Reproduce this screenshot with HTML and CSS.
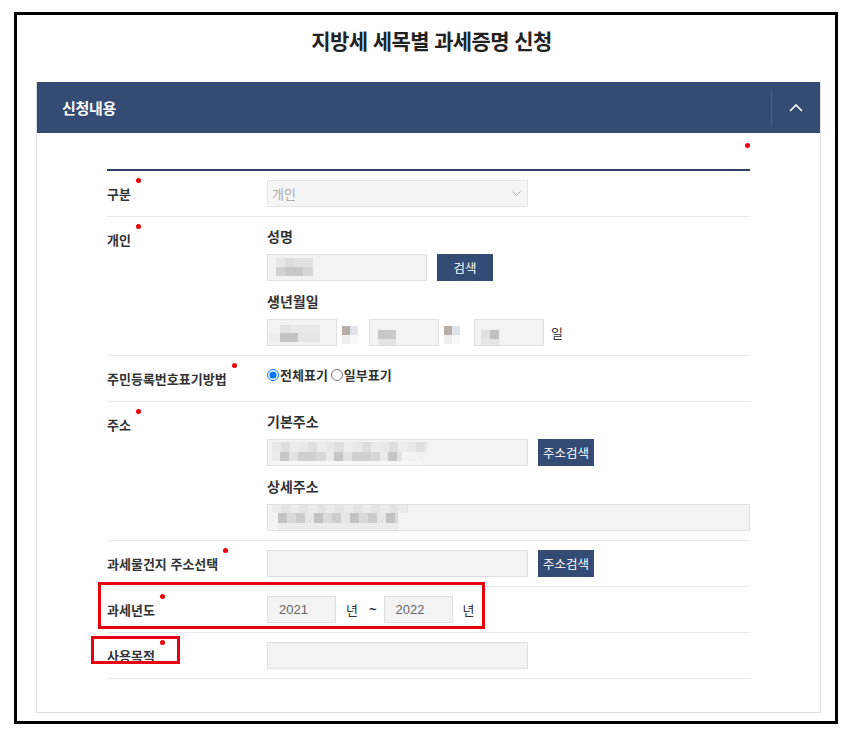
FILE: index.html
```html
<!DOCTYPE html>
<html lang="ko">
<head>
    <meta charset="UTF-8">
    <meta name="viewport" content="width=device-width, initial-scale=1.0">
    <title>지방세 세목별 과세증명 신청</title>
    <link rel="stylesheet" href="styles.css">
</head>
<body>
<div class="frame">
    <h1 class="page-title">지방세 세목별 과세증명 신청</h1>

    <div class="panel">
        <div class="panel-head">
            <h2>신청내용</h2>
            <button type="button" class="toggle" aria-label="접기">
                <svg width="14" height="8" viewBox="0 0 14 8"><polyline points="1,7 7,1 13,7" fill="none" stroke="#fff" stroke-width="1.6"/></svg>
            </button>
        </div>

        <div class="panel-body">
            <div class="legend"><span class="req"></span></div>

            <div class="form-table">
                <div class="row">
                    <div class="label">구분<span class="req"></span></div>
                    <div class="field">
                        <div class="select-wrap">
                            <select disabled><option>개인</option></select>
                            <svg class="caret" width="9" height="5" viewBox="0 0 9 5"><polyline points="0.5,0.5 4.5,4.5 8.5,0.5" fill="none" stroke="#aaa" stroke-width="1"/></svg>
                        </div>
                    </div>
                </div>

                <div class="row">
                    <div class="label">개인<span class="req"></span></div>
                    <div class="field">
                        <div class="sub">성명</div>
                        <div class="line">
                            <input type="text" class="inp w-name redact-name" readonly>
                            <button type="button" class="btn">검색</button>
                        </div>
                        <div class="sub next">생년월일</div>
                        <div class="line birth">
                            <input type="text" class="inp w-birth redact-b1" readonly>
                            <span class="blur-unit"></span>
                            <input type="text" class="inp w-birth redact-b2" readonly>
                            <span class="blur-unit"></span>
                            <input type="text" class="inp w-birth redact-b3" readonly>
                            <span class="unit">일</span>
                        </div>
                    </div>
                </div>

                <div class="row">
                    <div class="label">주민등록번호표기방법<span class="req"></span></div>
                    <div class="field">
                        <div class="radios">
                            <label><input type="radio" name="rrn" checked>전체표기</label>
                            <label><input type="radio" name="rrn">일부표기</label>
                        </div>
                    </div>
                </div>

                <div class="row">
                    <div class="label">주소<span class="req"></span></div>
                    <div class="field">
                        <div class="sub">기본주소</div>
                        <div class="line">
                            <input type="text" class="inp w-half redact-addr" readonly>
                            <button type="button" class="btn">주소검색</button>
                        </div>
                        <div class="sub next">상세주소</div>
                        <div class="line">
                            <input type="text" class="inp w-full redact-detail" readonly>
                        </div>
                    </div>
                </div>

                <div class="row">
                    <div class="label">과세물건지 주소선택<span class="req"></span></div>
                    <div class="field">
                        <div class="line">
                            <input type="text" class="inp w-half" readonly>
                            <button type="button" class="btn">주소검색</button>
                        </div>
                    </div>
                </div>

                <div class="row">
                    <div class="label">과세년도<span class="req"></span></div>
                    <div class="field">
                        <div class="line years">
                            <input type="text" class="inp w-year" value="2021">
                            <span class="unit">년</span>
                            <span class="tilde">~</span>
                            <input type="text" class="inp w-year" value="2022">
                            <span class="unit">년</span>
                        </div>
                    </div>
                    <div class="mark mark-year"></div>
                </div>

                <div class="row">
                    <div class="label">사용목적<span class="req"></span></div>
                    <div class="field">
                        <div class="line">
                            <input type="text" class="inp w-half">
                        </div>
                    </div>
                    <div class="mark mark-use"></div>
                </div>
            </div>
        </div>
    </div>
</div>
</body>
</html>
```

FILE: styles.css
```css
* {
    box-sizing: border-box;
}

body {
    margin: 0;
    font-family: "Noto Sans CJK KR", "Noto Sans", sans-serif;
    color: #333;
    background: #fff;
}

.frame {
    width: 824px;
    height: 712px;
    margin: 12px 0 0 14px;
    border: 3px solid #000;
    padding: 11px 14px 0 19px;
}

.page-title {
    margin: 0;
    padding-left: 6px;
    font-size: 21px;
    line-height: 28px;
    font-weight: 700;
    text-align: center;
    color: #222;
    letter-spacing: -0.6px;
}

/* panel */
.panel {
    margin-top: 28px;
    border: 1px solid #ddd;
    border-top: 0;
}

.panel-head {
    display: flex;
    height: 51px;
    background: #344b73;
}

.panel-head h2 {
    flex: 1;
    margin: 0;
    padding-left: 25px;
    font-size: 15px;
    line-height: 51px;
    font-weight: 700;
    color: #fff;
    letter-spacing: -0.3px;
}

.toggle {
    width: 49px;
    margin: 9px 0 8px;
    padding: 0 0 2px;
    border: 0;
    border-left: 1px solid rgba(255, 255, 255, 0.12);
    background: none;
    cursor: pointer;
}

.panel-body {
    padding: 0 70px 33px;
}

.legend {
    height: 36px;
    padding-top: 10px;
    display: flex;
    justify-content: flex-end;
}

.req {
    display: inline-block;
    width: 5px;
    height: 5px;
    border-radius: 50%;
    background: #e8000b;
    flex: none;
}

/* form rows */
.form-table {
    border-top: 2px solid #2d4064;
}

.row {
    position: relative;
    display: grid;
    grid-template-columns: 160px 1fr;
    border-bottom: 1px solid #e9e9e9;
}

.label {
    display: flex;
    align-items: flex-start;
    padding: 13px 0 12px;
    font-size: 13px;
    line-height: 20px;
    font-weight: 700;
    color: #333;
}

.label .req {
    margin: -6px 0 0 5px;
}

.field {
    padding: 9px 0;
}

.sub {
    font-size: 14px;
    line-height: 20px;
    font-weight: 700;
    color: #333;
    margin-bottom: 8px;
}

.sub.next {
    margin-top: 10px;
}

.line {
    display: flex;
    align-items: center;
    gap: 9px;
}

.inp {
    height: 27px;
    padding: 0 12px;
    border: 1px solid #e0e0e0;
    background-color: #f3f3f3;
    font-family: "Liberation Sans", sans-serif;
    font-size: 13px;
    color: #666;
    outline: none;
}

.w-name { width: 160px; }
.w-half { width: 261px; }
.w-full { flex: 1; }
.w-birth { width: 70px; }
.w-year { width: 69px; padding-left: 11px; }

.btn {
    width: 56px;
    height: 27px;
    padding: 0;
    border: 0;
    background: #344b73;
    color: #fff;
    font-family: inherit;
    font-size: 12.5px;
    cursor: pointer;
}

.line .btn {
    margin-left: 1px;
}

.select-wrap {
    position: relative;
    width: 261px;
}

.select-wrap select {
    width: 100%;
    height: 27px;
    padding: 0 4px;
    appearance: none;
    -webkit-appearance: none;
    border: 1px solid #e4e4e4;
    background: #f5f5f5;
    color: #aaa;
    font-family: inherit;
    font-size: 13px;
    opacity: 1;
}

.select-wrap .caret {
    position: absolute;
    right: 7px;
    top: 11px;
}

.radios {
    display: flex;
    align-items: center;
    font-size: 13px;
    line-height: 20px;
    font-weight: 700;
    color: #333;
}

.radios label {
    display: flex;
    align-items: center;
    margin-right: 3px;
}

.radios input {
    width: 12px;
    height: 12px;
    margin: 0 1px 0 0;
}

.birth {
    gap: 0;
}

.blur-unit {
    width: 16px;
    height: 27px;
    margin: 0 11px 0 5px;
    background:
        linear-gradient(90deg, #b9aea6 0 8px, #dfe3ea 8px 16px) 0 7px / 16px 9px no-repeat,
        linear-gradient(90deg, #eeeeee 0 8px, #f7f7f7 8px 16px) 0 16px / 16px 9px no-repeat;
}

.birth .blur-unit + .w-birth + .blur-unit {
    margin-right: 14px;
}

.unit {
    font-size: 13px;
    line-height: 20px;
    color: #333;
    margin-left: 7px;
}

.years {
    gap: 0;
}

.years .unit {
    margin: 0 11px 0 10px;
}

.tilde {
    font-family: "Liberation Sans", sans-serif;
    font-size: 13px;
    font-weight: 700;
    margin-right: 7px;
}

/* redacted values */
.redact-name {
    background:
        linear-gradient(90deg, #e6e6e6 0 9px, #dcdcdc 9px 18px, #e2e2e2 18px 37px) 8px 3px / 37px 9px no-repeat,
        linear-gradient(90deg, #d2d2d2 0 9px, #c8c8c8 9px 27px, #d6d6d6 27px 37px) 8px 12px / 37px 9px no-repeat,
        #f3f3f3;
}

.redact-b1 {
    background:
        linear-gradient(90deg, #f3f3f3 0 10px, #e2e2e2 10px 20px, #e8e8e8 20px 38px) 2px 5px / 50px 8px no-repeat,
        linear-gradient(90deg, #ededed 0 10px, #c4c4c4 10px 28px, #e6e6e6 28px 50px) 2px 13px / 50px 9px no-repeat,
        #f3f3f3;
}

.redact-b2 {
    background:
        linear-gradient(90deg, #c8c8c8 0 18px, #f3f3f3 18px 30px) 8px 10px / 30px 9px no-repeat,
        linear-gradient(#e3e3e3, #e3e3e3) 8px 19px / 18px 6px no-repeat,
        #f3f3f3;
}

.redact-b3 {
    background:
        linear-gradient(90deg, #e0e0e0 0 9px, #c0c0c0 9px 18px) 6px 10px / 18px 9px no-repeat,
        linear-gradient(#e6e6e6, #e6e6e6) 6px 19px / 18px 6px no-repeat,
        #f3f3f3;
}

.redact-addr {
    background:
        repeating-linear-gradient(90deg, #e8e8e8 0 9px, #dedede 9px 18px, #ececec 18px 27px) 4px 2px / 156px 10px no-repeat,
        repeating-linear-gradient(90deg, #ebebeb 0 8px, #c6c6c6 8px 17px, #e2e2e2 17px 26px, #d0d0d0 26px 44px, #d8d8d8 44px 54px) 4px 12px / 130px 9px no-repeat,
        linear-gradient(#f7f7f7, #f7f7f7) 4px 21px / 150px 5px no-repeat,
        #f3f3f3;
}

.redact-detail {
    background:
        repeating-linear-gradient(90deg, #ececec 0 9px, #e3e3e3 9px 18px) 4px 0 / 136px 8px no-repeat,
        repeating-linear-gradient(90deg, #c2c2c2 0 9px, #dadada 9px 18px, #cdcdcd 18px 27px, #e6e6e6 27px 36px) 10px 8px / 120px 10px no-repeat,
        linear-gradient(#ececec, #ececec) 10px 18px / 120px 8px no-repeat,
        #f3f3f3;
}

/* red review marks drawn over the rows */
.mark {
    position: absolute;
    border: 3px solid #e60012;
    pointer-events: none;
}

.mark-year {
    left: -9px;
    top: -5px;
    width: 387px;
    height: 47px;
}

.mark-use {
    left: -16px;
    top: 3px;
    width: 89px;
    height: 28px;
}
```
